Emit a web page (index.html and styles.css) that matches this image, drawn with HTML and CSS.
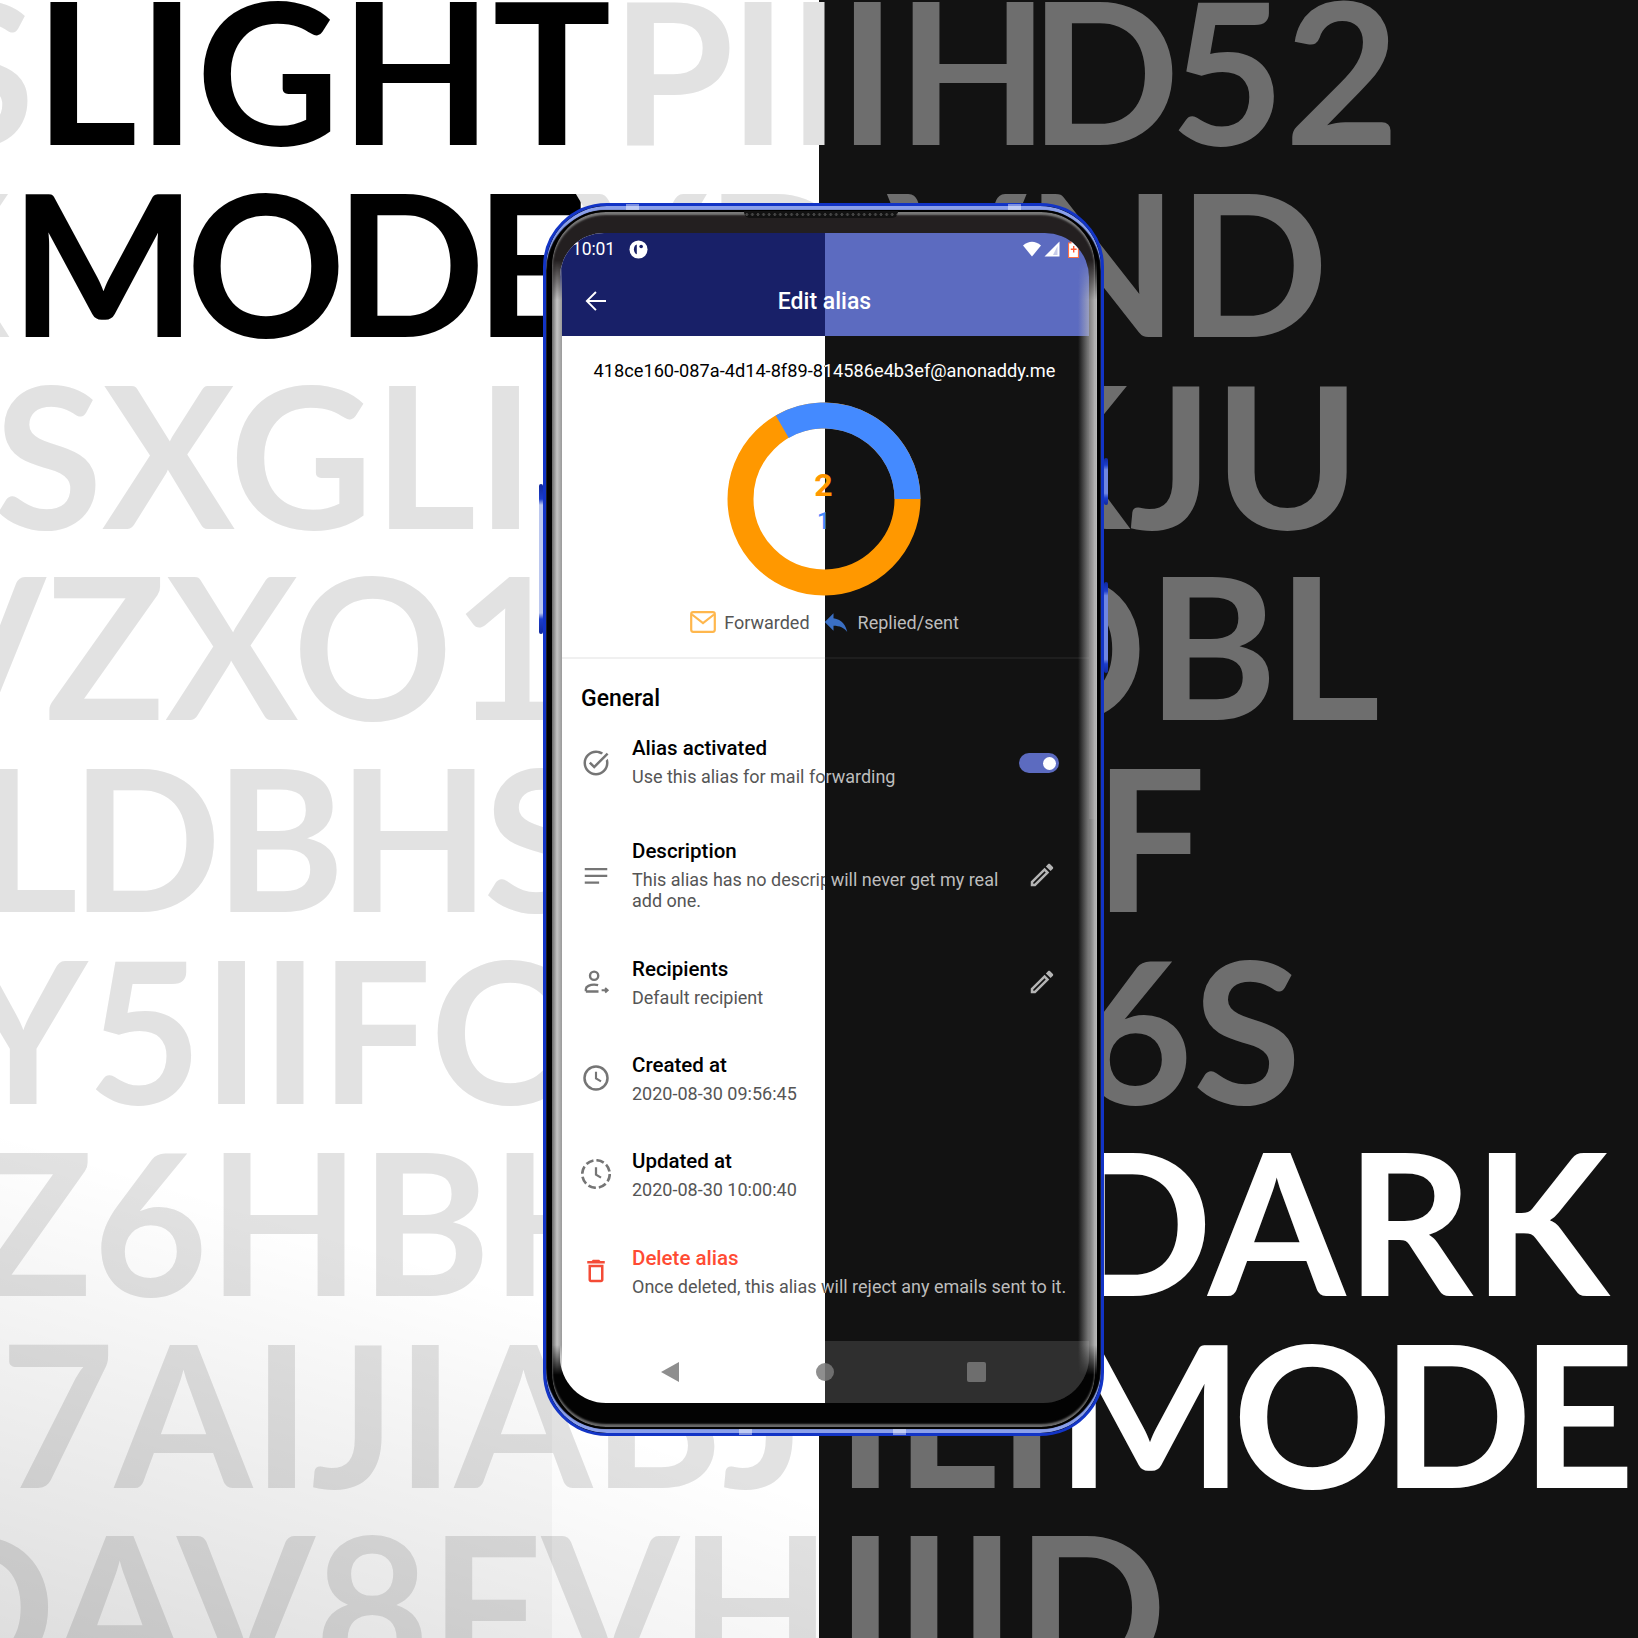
FILE: index.html
```html
<!DOCTYPE html>
<html lang="en">
<head>
<meta charset="utf-8">
<title>Edit alias - light and dark mode</title>
<link rel="stylesheet" href="styles.css">
</head>
<body>
<svg class="sprite" aria-hidden="true">
  <symbol id="i-back" viewBox="0 0 24 24"><path d="M20 11.2H6.6l5.9-5.9L11.4 4.200 3.600 12l7.800 7.800 1.100-1.100-5.900-5.900H20z"/></symbol>
  <symbol id="i-check" viewBox="0 0 24 24"><path d="M22 5.180L10.590 16.600l-4.240-4.240 1.410-1.410 2.830 2.830 10-10L22 5.180zm-2.210 5.040c.13.570.21 1.170.21 1.780 0 4.420-3.580 8-8 8s-8-3.580-8-8 3.580-8 8-8c1.580 0 3.040.46 4.280 1.250l1.440-1.440C16.100 2.670 14.130 2 12 2 6.480 2 2 6.480 2 12s4.480 10 10 10 10-4.480 10-10c0-1.190-.22-2.330-.6-3.390l-1.610 1.610z"/></symbol>
  <symbol id="i-lines" viewBox="0 0 24 24"><path d="M3 6.300h18v1.800H3zM3 11.700h18v1.800H3zM3 17.100h11.500v1.800H3z"/></symbol>
  <symbol id="i-person" viewBox="0 0 24 24"><circle cx="10.500" cy="7" r="3.300" fill="none" stroke="currentColor" stroke-width="1.900"/><path d="M3.900 19.400v-1.900c0-2 3.300-3.400 6.600-3.400 1.100 0 2.200.15 3.200.45M3.900 19.600h10.100" fill="none" stroke="currentColor" stroke-width="1.900"/><path d="M16.500 18.600h4.500M19.300 16.800l2 1.800-2 1.800" fill="none" stroke="currentColor" stroke-width="1.600"/></symbol>
  <symbol id="i-clock" viewBox="0 0 24 24"><circle cx="12" cy="12" r="9.200" fill="none" stroke="currentColor" stroke-width="2"/><path d="M12 7v5.300l4 2.400" fill="none" stroke="currentColor" stroke-width="1.700"/></symbol>
  <symbol id="i-updated" viewBox="0 0 24 24"><circle cx="12" cy="12" r="11" fill="none" stroke="currentColor" stroke-width="2.100" stroke-dasharray="6.200 2.440"/><path d="M12 6.500v6l4 2.400" fill="none" stroke="currentColor" stroke-width="1.800"/></symbol>
  <symbol id="i-trash" viewBox="0 0 24 24"><path d="M6 19c0 1.100.9 2 2 2h8c1.100 0 2-.9 2-2V7H6v12zM8 9h8v10H8V9zm7.500-5l-1-1h-5l-1 1H5v2h14V4h-3.500z"/></symbol>
  <symbol id="i-pen" viewBox="0 0 24 24"><path d="M14.060 9.020l.92.92L5.920 19H5v-.92l9.060-9.060M17.660 3c-.25 0-.51.100-.7.29l-1.830 1.830 3.750 3.750 1.830-1.830c.39-.39.39-1.020 0-1.410l-2.340-2.340c-.2-.2-.45-.29-.71-.29zm-3.600 3.190L3 17.250V21h3.750L17.810 9.940l-3.750-3.750z"/></symbol>
  <symbol id="i-mail" viewBox="0 0 26 22"><rect x="1.200" y="1.200" width="23.600" height="19.600" rx="2" fill="none" stroke="currentColor" stroke-width="2.200"/><path d="M2 3.500l11 8.500 11-8.500" fill="none" stroke="currentColor" stroke-width="2.200"/></symbol>
  <symbol id="i-reply" viewBox="0 0 24 24"><path d="M10 9V5l-7 7 7 7v-4.100c5 0 8.500 1.600 11 5.100-1-5-4-10-11-11z"/></symbol>
  <symbol id="i-donut" viewBox="0 0 194 194"><circle cx="97" cy="97" r="83.500" fill="none" stroke="#ff9800" stroke-width="26"/><path d="M55.250 24.690A83.500 83.500 0 0 1 180.500 97" fill="none" stroke="#448aff" stroke-width="26"/></symbol>
  <symbol id="i-status-app" viewBox="0 0 20 20"><circle cx="10" cy="10" r="9.500" fill="#fff"/><path class="hole" d="M8.200 4.800C6.400 5.200 5.200 7 5.200 9.800s1.200 4.800 3 5.200z"/><circle class="hole" cx="12.800" cy="6.800" r="1.900"/></symbol>
  <symbol id="i-wifi" viewBox="0 0 20 16"><path d="M1 4.500Q10-3 19 4.500L10 15.500z" fill="#fff"/></symbol>
  <symbol id="i-signal" viewBox="0 0 16 16"><path d="M15.500.5v15H.5z" fill="#fff"/><path d="M13.500 5v9H9z" fill-opacity=".35" fill="#5c6bc0"/></symbol>
  <symbol id="i-battery" viewBox="0 0 11 17"><path d="M3 .5h5v1.500h2.500v14.500H.5V2H3z" fill="#fff" stroke="#ff7043" stroke-width="1.200"/><path d="M5 5h1.400v2.500h2.200v1.400H6.400v2.500H5V8.900H2.800V7.500H5z" fill="#ff5a36"/></symbol>
</svg>

<div class="poster">
  <div class="type type-light">
    <p class="line ll1"><span class="dim">S</span><span class="strong">LIGHT</span><span class="dim"><span class="k5">P</span>III</span></p>
    <p class="line ll2"><span class="dim">X</span><span class="strong tight">MODE</span><span class="dim">YDV</span></p>
    <p class="line ll3"><span class="dim">SXGLI</span></p>
    <p class="line ll4"><span class="dim">VZXO1</span></p>
    <p class="line ll5"><span class="dim">LDBHS</span></p>
    <p class="line ll6"><span class="dim">Y5IIFO</span></p>
    <p class="line ll7"><span class="dim">Z6HBH</span></p>
    <p class="line ll8"><span class="dim">7AIJIABJ</span></p>
    <p class="line ll9"><span class="dim">DAV8FVHI</span></p>
  </div>
  <div class="type type-dark">
    <p class="line ld1"><span class="dim">I<span class="k20">H</span><span class="k10">D</span>52</span></p>
    <p class="line ld2"><span class="dim">VND</span></p>
    <p class="line ld3"><span class="dim">KJU</span></p>
    <p class="line ld4"><span class="dim">OBL</span></p>
    <p class="line ld5"><span class="dim">F</span></p>
    <p class="line ld6"><span class="dim">6S</span></p>
    <p class="line ld7"><span class="strong">DARK</span></p>
    <p class="line ld8"><span class="dim">ILI</span><span class="strong tight">MODE</span></p>
    <p class="line ld9"><span class="dim">I<span class="k40">L</span>ID</span></p>
  </div>
  <div class="shade shade-left"></div>
  <div class="shade shade-mid"></div>

  <div class="phone">
    <span class="btn btn-left"></span>
    <span class="btn btn-right-a"></span>
    <span class="btn btn-right-b"></span>
    <span class="antenna ant-ta"></span>
    <span class="antenna ant-tb"></span>
    <span class="antenna ant-ba"></span>
    <span class="antenna ant-bb"></span>
    <div class="bezel">
      <span class="speaker"></span>
      <div class="screen">

        <div class="ui ui-light">
          <div class="status">
            <span class="clock">10:01</span>
            <svg class="st-app"><use href="#i-status-app"/></svg>
            <span class="st-gap"></span>
            <svg class="st-wifi"><use href="#i-wifi"/></svg>
            <svg class="st-signal"><use href="#i-signal"/></svg>
            <svg class="st-battery"><use href="#i-battery"/></svg>
          </div>
          <div class="appbar">
            <svg class="back"><use href="#i-back"/></svg>
            <span class="apptitle">Edit alias</span>
          </div>
          <p class="email">418ce160-087a-4d14-8f89-814586e4b3ef@anonaddy.me</p>
          <div class="donut">
            <svg class="donut-svg"><use href="#i-donut"/></svg>
            <div class="counts"><span class="c-two">2</span><span class="c-one">1</span></div>
          </div>
          <div class="legend">
            <svg class="l-mail"><use href="#i-mail"/></svg><span class="l-fw">Forwarded</span>
            <svg class="l-reply"><use href="#i-reply"/></svg><span class="l-re">Replied/sent</span>
          </div>
          <div class="divider"></div>
          <h2 class="section">General</h2>
          <div class="row row-first">
            <svg class="ic"><use href="#i-check"/></svg>
            <div class="txt"><div class="t">Alias activated</div><div class="s">Use this alias for mail forwarding</div></div>
            <span class="toggle"><span class="knob"></span></span>
          </div>
          <div class="row row-desc">
            <svg class="ic"><use href="#i-lines"/></svg>
            <div class="txt"><div class="t">Description</div><div class="s">This alias has no description<br>add one.</div></div>
            <svg class="pen"><use href="#i-pen"/></svg>
          </div>
          <div class="row">
            <svg class="ic"><use href="#i-person"/></svg>
            <div class="txt"><div class="t">Recipients</div><div class="s">Default recipient</div></div>
            <svg class="pen"><use href="#i-pen"/></svg>
          </div>
          <div class="row">
            <svg class="ic"><use href="#i-clock"/></svg>
            <div class="txt"><div class="t">Created at</div><div class="s">2020-08-30 09:56:45</div></div>
          </div>
          <div class="row">
            <svg class="ic"><use href="#i-updated"/></svg>
            <div class="txt"><div class="t">Updated at</div><div class="s">2020-08-30 10:00:40</div></div>
          </div>
          <div class="row">
            <svg class="ic ic-del"><use href="#i-trash"/></svg>
            <div class="txt"><div class="t t-del">Delete alias</div><div class="s">Once deleted, this alias will reject any emails sent to it.</div></div>
          </div>
          <div class="nav">
            <span class="nav-back"></span><span class="nav-home"></span><span class="nav-rec"></span>
          </div>
        </div>

        <div class="ui ui-dark">
          <div class="status">
            <span class="clock">10:01</span>
            <svg class="st-app"><use href="#i-status-app"/></svg>
            <span class="st-gap"></span>
            <svg class="st-wifi"><use href="#i-wifi"/></svg>
            <svg class="st-signal"><use href="#i-signal"/></svg>
            <svg class="st-battery"><use href="#i-battery"/></svg>
          </div>
          <div class="appbar">
            <svg class="back"><use href="#i-back"/></svg>
            <span class="apptitle">Edit alias</span>
          </div>
          <p class="email">418ce160-087a-4d14-8f89-814586e4b3ef@anonaddy.me</p>
          <div class="donut">
            <svg class="donut-svg"><use href="#i-donut"/></svg>
            <div class="counts"><span class="c-two">2</span><span class="c-one">1</span></div>
          </div>
          <div class="legend">
            <svg class="l-mail"><use href="#i-mail"/></svg><span class="l-fw">Forwarded</span>
            <svg class="l-reply"><use href="#i-reply"/></svg><span class="l-re">Replied/sent</span>
          </div>
          <div class="divider"></div>
          <h2 class="section">General</h2>
          <div class="row row-first">
            <svg class="ic"><use href="#i-check"/></svg>
            <div class="txt"><div class="t">Alias activated</div><div class="s">Use this alias for mail forwarding</div></div>
            <span class="toggle"><span class="knob"></span></span>
          </div>
          <div class="row row-desc">
            <svg class="ic"><use href="#i-lines"/></svg>
            <div class="txt"><div class="t">Description</div><div class="s">This alias has no descri<span class="w-gap"></span>will never get my real<br>add one.</div></div>
            <svg class="pen"><use href="#i-pen"/></svg>
          </div>
          <div class="row">
            <svg class="ic"><use href="#i-person"/></svg>
            <div class="txt"><div class="t">Recipients</div><div class="s">Default recipient</div></div>
            <svg class="pen"><use href="#i-pen"/></svg>
          </div>
          <div class="row">
            <svg class="ic"><use href="#i-clock"/></svg>
            <div class="txt"><div class="t">Created at</div><div class="s">2020-08-30 09:56:45</div></div>
          </div>
          <div class="row">
            <svg class="ic"><use href="#i-updated"/></svg>
            <div class="txt"><div class="t">Updated at</div><div class="s">2020-08-30 10:00:40</div></div>
          </div>
          <div class="row">
            <svg class="ic ic-del"><use href="#i-trash"/></svg>
            <div class="txt"><div class="t t-del">Delete alias</div><div class="s">Once deleted, this alias will reject any emails sent to it.</div></div>
          </div>
          <div class="nav">
            <span class="nav-back"></span><span class="nav-home"></span><span class="nav-rec"></span>
          </div>
        </div>

      </div>
      <span class="glare glare-left"></span>
      <span class="glare glare-right"></span>
    </div>
  </div>
</div>
</body>
</html>
```
FILE: styles.css
```css
* { box-sizing: border-box; }
html, body { margin: 0; padding: 0; }
body { width: 1638px; height: 1638px; overflow: hidden; font-family: Roboto, "Liberation Sans", sans-serif; }
.sprite { position: absolute; width: 0; height: 0; }

.poster {
  position: relative;
  width: 1638px;
  height: 1638px;
  overflow: hidden;
  background: linear-gradient(to right, #fff 819px, #121212 819px);
}

/* big background lettering */
.type {
  position: absolute;
  left: 0;
  top: -27px;
  width: 1638px;
  font-family: Lato, "Liberation Sans", sans-serif;
  font-weight: 700;
  font-size: 198px;
  line-height: 191.8px;
  white-space: nowrap;
}
.type-light { clip-path: inset(-100px 813.5px -100px 0); }
.type-dark { clip-path: inset(-100px 0 -100px 824.5px); }
.type-light .dim { color: #e2e2e2; }
.type-light .strong { color: #000; }
.type-dark .dim { color: #6e6e6e; }
.type-dark .strong { color: #fff; }
.line { margin: 0; height: 191.8px; }
.tight { letter-spacing: -11px; }
.k5 { letter-spacing: -5px; }
.k10 { letter-spacing: -10px; }
.k20 { letter-spacing: -20px; }
.k40 { letter-spacing: -40px; }
.ll1 { margin-left: -74px; }
.ll2 { margin-left: -123px; }
.ll3 { margin-left: -6px; }
.ll4 { margin-left: -92px; }
.ll5 { margin-left: -25px; letter-spacing: -7px; }
.ll6 { margin-left: -41px; }
.ll7 { margin-left: -27px; }
.ll8 { margin-left: 0; }
.ll9 { margin-left: -95px; }
.ld1 { margin-left: 838px; }
.ld2 { margin-left: 888px; }
.ld3 { margin-left: 993px; }
.ld4 { margin-left: 987px; }
.ld5 { margin-left: 1094px; }
.ld6 { margin-left: 1078px; }
.ld7 { margin-left: 1062px; }
.ld8 { margin-left: 836px; }
.ld9 { margin-left: 836px; }

.shade { position: absolute; }
.shade-left { left: 0; top: 1130px; width: 552px; height: 508px; background: linear-gradient(197deg, rgba(0,0,0,0) 25%, rgba(0,0,0,.13) 100%); }
.shade-mid { left: 552px; top: 1400px; width: 267px; height: 238px; background: linear-gradient(200deg, rgba(0,0,0,0) 30%, rgba(0,0,0,.05) 100%); }

/* phone */
.phone {
  position: absolute;
  left: 543px;
  top: 203px;
  width: 561px;
  height: 1233px;
  padding: 4px;
  border: 3px solid #1234c6;
  border-radius: 64px;
  background: #000;
  box-shadow: inset 0 4px 1px #8ba0ea, inset 0 -4px 1px #8ba0ea;
}
.btn { position: absolute; width: 4px; border-radius: 2px; background: linear-gradient(to bottom, #10289c, #1d3ecb 10%, #bcc8ef 14%, #bcc8ef 86%, #1d3ecb 90%, #10289c); }
.btn-left { left: -7px; top: 278px; height: 150px; }
.btn-right-a { right: -7px; top: 252px; height: 47px; background: linear-gradient(to bottom, #10289c, #1d3ecb 15%, #6f86e2 25%, #6f86e2 75%, #1d3ecb 85%, #10289c); }
.btn-right-b { right: -7px; top: 376px; height: 91px; background: linear-gradient(to bottom, #10289c, #1d3ecb 10%, #6f86e2 15%, #6f86e2 85%, #1d3ecb 90%, #10289c); }
.antenna { position: absolute; width: 13px; height: 7px; background: rgba(255,255,255,.45); }
.ant-ta { left: 80px; top: -2px; }
.ant-tb { left: 462px; top: -2px; }
.ant-ba { left: 193px; bottom: -2px; }
.ant-bb { left: 347px; bottom: -2px; }

.bezel {
  position: relative;
  width: 100%;
  height: 100%;
  padding: 21px 6px 23px 8px;
  border: 2px solid #000;
  border-radius: 56px;
  background: linear-gradient(to bottom, #231f20 50%, #030303 50%);
  box-shadow: inset 0 3px 2px #7a7a7a, inset 0 -3px 2px #6a6a6a;
}
.speaker {
  position: absolute;
  left: 192px;
  top: -1px;
  width: 154px;
  height: 7px;
  border-radius: 0 0 6px 6px;
  background-color: #111;
  background-image: radial-gradient(circle, #444 1.3px, transparent 1.6px);
  background-size: 5.600px 7px;
}
.glare { position: absolute; top: 48px; bottom: 52px; width: 20px; pointer-events: none; }
.glare-left {
  left: 0;
  width: 10px;
  background: linear-gradient(to right, #6a6a6a, #c3c3c3 50%, #9a9a9a);
  -webkit-mask-image: linear-gradient(to bottom, transparent, #000 40px, #000 calc(100% - 30px), transparent);
  mask-image: linear-gradient(to bottom, transparent, #000 40px, #000 calc(100% - 30px), transparent);
}
.glare-right {
  right: -2px;
  width: 19px;
  background: linear-gradient(to right, rgba(190,190,190,0), rgba(190,190,190,.55) 50%, #bdbdbd 100%);
  -webkit-mask-image: linear-gradient(to bottom, transparent, #000 40px, #000 calc(100% - 30px), transparent);
  mask-image: linear-gradient(to bottom, transparent, #000 40px, #000 calc(100% - 30px), transparent);
}

/* screen: the same page twice, one half of each shown */
.screen {
  display: grid;
  width: 529px;
  height: 1170px;
  overflow: hidden;
  border-radius: 44px 44px 46px 46px;
}
.ui {
  grid-area: 1 / 1;
  display: flex;
  flex-direction: column;
  min-width: 0;
  height: 1170px;
}
.ui-light { background: #fff; color: #000; clip-path: inset(0 264px 0 0); --bar: #182068; --sub: #555; --head: #000; --leg: #555; --pen: #757575; --ic: #757575; --line: #f0f0f0; }
.ui-dark { background: #121212; color: #fff; clip-path: inset(0 0 0 265px); --bar: #5c6bc0; --sub: #bdbdbd; --head: #fff; --leg: #bdbdbd; --pen: #b4b4b4; --ic: #bdbdbd; --line: #1e1e1e; }

.status {
  display: flex;
  align-items: center;
  height: 32px;
  padding: 0 10px 0 12px;
  background: var(--bar);
  color: #fff;
}
.clock { font-size: 17.500px; letter-spacing: -.1px; width: 57px; }
.st-app { width: 19px; height: 19px; }
.hole { fill: #182068; }
.st-gap { flex: 1; }
.st-wifi { width: 20px; height: 16px; }
.st-signal { width: 16px; height: 16px; margin-left: 2px; }
.st-battery { width: 11px; height: 17px; margin-left: 8px; }

.appbar {
  display: flex;
  align-items: center;
  height: 71px;
  padding-left: 21px;
  background: var(--bar);
  color: #fff;
}
.back { width: 30px; height: 30px; fill: #fff; }
.apptitle { flex: 1; padding-top: 2px; text-align: center; margin-left: -51px; font-size: 23px; font-weight: 500; }

.email { margin: 23px 0 0; height: 23px; line-height: 24px; text-align: center; font-size: 18.200px; color: var(--head); white-space: nowrap; }

.donut { position: relative; align-self: center; width: 194px; height: 194px; margin: 20px 0 0 -2px; }
.donut-svg { display: block; width: 194px; height: 194px; }
.counts { position: absolute; left: 0; right: 0; top: 0; bottom: 0; display: flex; flex-direction: column; align-items: center; }
.c-two { margin-top: 63px; height: 40px; line-height: 40px; font-size: 32px; font-weight: 700; color: #ff9800; }
.c-one { margin-top: 2px; height: 30px; line-height: 30px; font-size: 23px; font-weight: 500; color: #448aff; }

.legend { display: flex; align-items: center; justify-content: center; height: 30px; margin-top: 11px; font-size: 18px; color: var(--leg); white-space: nowrap; }
.l-mail { width: 26px; height: 22px; color: #ffb74d; margin-right: 8px; }
.l-reply { width: 30px; height: 30px; fill: #3a6fc4; margin: 0 7px 0 11px; }

.divider { height: 2px; margin-top: 20px; background: var(--line); }
.section { margin: 26px 0 -2px 21px; height: 28px; line-height: 28px; font-size: 23px; font-weight: 500; color: var(--head); }

.row { display: flex; align-items: center; padding: 22.200px 30px 22.200px 21px; }
.row-first { margin: 4px 0 5px; padding-top: 20px; padding-bottom: 20px; }
.ic { flex: none; width: 30px; height: 30px; margin-right: 21px; fill: var(--ic); color: var(--ic); }
.ic-del { fill: #f44b36; color: #f44b36; }
.txt { flex: 1; min-width: 0; }
.row-first .txt { padding-bottom: 4px; }
.t { height: 26px; line-height: 26px; font-size: 20.500px; font-weight: 500; color: var(--head); white-space: nowrap; }
.t-del { color: #ff4b33; }
.s { margin-top: 5px; line-height: 21px; font-size: 18px; color: var(--sub); white-space: nowrap; }
.w-gap { display: inline-block; width: 10.800px; }
.pen { flex: none; width: 30px; height: 30px; fill: var(--pen); margin-right: 2px; }
.toggle { flex: none; display: flex; align-items: center; justify-content: flex-end; width: 40px; height: 20px; padding-right: 3px; border-radius: 10px; background: #5c6bc0; }
.knob { width: 13px; height: 13px; border-radius: 50%; background: #fff; }

.nav { display: flex; align-items: center; justify-content: space-between; margin-top: auto; height: 62px; padding: 0 103px 0 101px; }
.ui-dark .nav { background: #2f2f2f; }
.nav-back { width: 0; height: 0; border-style: solid; border-width: 10px 18px 10px 0; border-color: transparent #8e8e8e transparent transparent; }
.nav-home { width: 18px; height: 18px; margin-left: 3px; border-radius: 50%; background: #8e8e8e; }
.nav-rec { width: 19px; height: 20px; border-radius: 2px; background: #8e8e8e; }
.ui-dark .nav-back { border-right-color: #6e6e6e; }
.ui-dark .nav-home, .ui-dark .nav-rec { background: #6e6e6e; }
```
